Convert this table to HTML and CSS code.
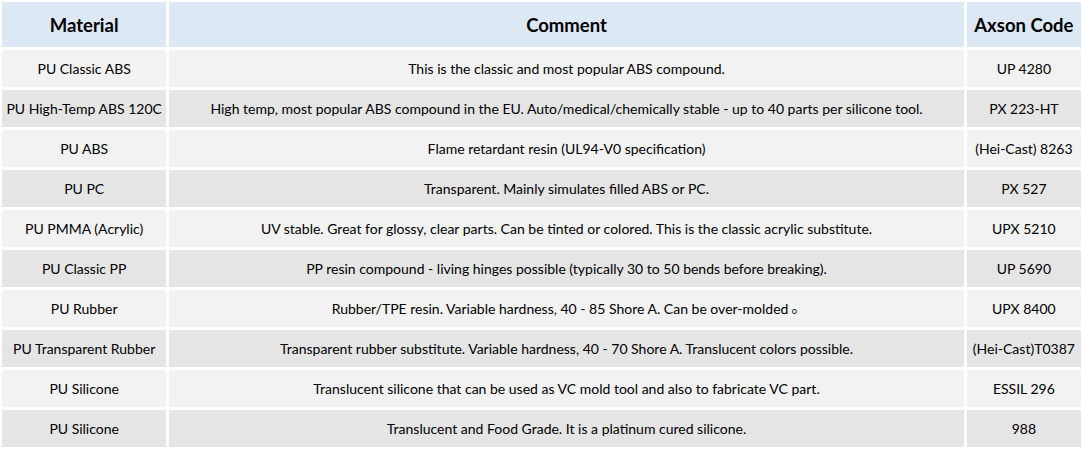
FILE: index.html
```html
<!DOCTYPE html>
<html>
<head>
<meta charset="utf-8">
<link rel="stylesheet" href="styles.css">
</head>
<body>
<table class="materials">
  <colgroup>
    <col class="col-material">
    <col class="col-comment">
    <col class="col-code">
  </colgroup>
  <thead>
    <tr class="head-row">
      <th>Material</th>
      <th>Comment</th>
      <th>Axson Code</th>
    </tr>
  </thead>
  <tbody>
    <tr class="odd"><td>PU Classic ABS</td><td>This is the classic and most popular ABS compound.</td><td>UP 4280</td></tr>
    <tr class="even"><td>PU High-Temp ABS 120C</td><td>High temp, most popular ABS compound in the EU. Auto/medical/chemically stable - up to 40 parts per silicone tool.</td><td>PX 223-HT</td></tr>
    <tr class="odd"><td>PU ABS</td><td>Flame retardant resin (UL94-V0 specification)</td><td>(Hei-Cast) 8263</td></tr>
    <tr class="even"><td>PU PC</td><td>Transparent. Mainly simulates filled ABS or PC.</td><td>PX 527</td></tr>
    <tr class="odd"><td>PU PMMA (Acrylic)</td><td>UV stable. Great for glossy, clear parts. Can be tinted or colored. This is the classic acrylic substitute.</td><td>UPX 5210</td></tr>
    <tr class="even"><td>PU Classic PP</td><td>PP resin compound - living hinges possible (typically 30 to 50 bends before breaking).</td><td>UP 5690</td></tr>
    <tr class="odd"><td>PU Rubber</td><td>Rubber/TPE resin. Variable hardness, 40 - 85 Shore A. Can be over-molded<span class="dot">。</span></td><td>UPX 8400</td></tr>
    <tr class="even"><td>PU Transparent Rubber</td><td>Transparent rubber substitute. Variable hardness, 40 - 70 Shore A. Translucent colors possible.</td><td>(Hei-Cast)T0387</td></tr>
    <tr class="odd"><td>PU Silicone</td><td>Translucent silicone that can be used as VC mold tool and also to fabricate VC part.</td><td>ESSIL 296</td></tr>
    <tr class="even"><td>PU Silicone</td><td>Translucent and Food Grade. It is a platinum cured silicone.</td><td>988</td></tr>
  </tbody>
</table>
</body>
</html>
```

FILE: styles.css
```css
html, body {
  margin: 0;
  padding: 0;
  background: #ffffff;
}

.materials {
  border-collapse: separate;
  border-spacing: 3px;
  margin: -1px 0 0 -1px;
  table-layout: fixed;
  width: 1085px;
  font-family: "Lato", "Open Sans", sans-serif;
  color: #000000;
}

.col-material { width: 164px; }
.col-comment { width: 793px; }
.col-code { width: 114px; }

.materials th,
.materials td {
  padding: 0;
  text-align: center;
  vertical-align: middle;
  white-space: nowrap;
  overflow: hidden;
}

.head-row th {
  height: 45px;
  background: #dce9f5;
  font-size: 18.5px;
  font-weight: bold;
}

.materials td {
  height: 37px;
  font-size: 14px;
}

.dot {
  display: inline-block;
  margin-left: 3px;
  font-family: "Noto Sans CJK SC", sans-serif;
  font-size: 15px;
  line-height: 1;
  position: relative;
  top: -2px;
  width: 10px;
  text-align: left;
}

.odd td { background: #f2f2f2; }
.even td { background: #e5e5e5; }
```
